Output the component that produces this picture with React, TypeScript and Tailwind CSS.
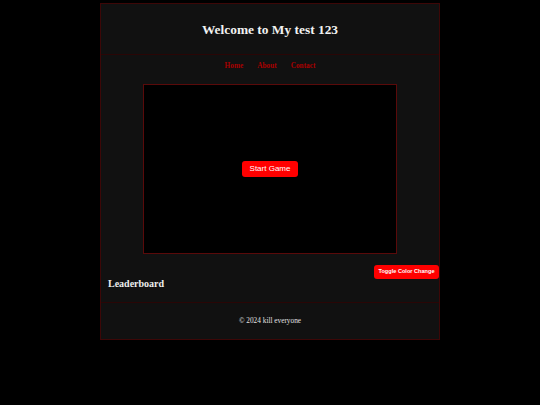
export default function App() {
  return (
    <div className="min-h-[405px] bg-black pt-[3px] font-['Liberation_Serif',serif]">
      <div className="relative mx-auto w-[340px] border border-[#3d0707] bg-[#111111]">
        {/* Header */}
        <header className="flex h-[51px] items-center justify-center border-b border-[#2a0606]">
          <h1 className="mt-[2px] text-[13.4px] font-bold leading-none text-[#f2f2f2]">
            Welcome to My test 123
          </h1>
        </header>

        {/* Nav */}
        <nav className="flex h-[21px] items-center justify-center gap-[14px] text-[7.3px] font-bold leading-none text-[#a80000]">
          <a>Home</a>
          <a>About</a>
          <a>Contact</a>
        </nav>

        {/* Game canvas */}
        <div className="mt-[8px] flex justify-center">
          <div className="flex h-[170px] w-[254px] items-center justify-center border border-[#5a0a0a] bg-black">
            <button className="h-[16px] rounded-[3px] bg-[#ff0000] px-[8px] font-['Liberation_Sans',sans-serif] text-[8px] font-medium leading-none text-white">
              Start Game
            </button>
          </div>
        </div>

        {/* Leaderboard */}
        <section className="border-b border-[#2a0606] px-[7px] pb-[12px] pt-[24px]">
          <h2 className="text-[10px] font-bold leading-[12px] text-[#eeeeee]">Leaderboard</h2>
        </section>

        {/* Footer */}
        <footer className="flex h-[36px] items-center justify-center text-[7.3px] leading-none text-[#e0e0e0]">
          © 2024 kill everyone
        </footer>

        <button className="absolute right-0 top-[261px] h-[14px] w-[65px] rounded-[3px] bg-[#ff0000] font-['Liberation_Sans',sans-serif] text-[5.6px] font-bold leading-none text-white">
          Toggle Color Change
        </button>
      </div>
    </div>
  );
}
